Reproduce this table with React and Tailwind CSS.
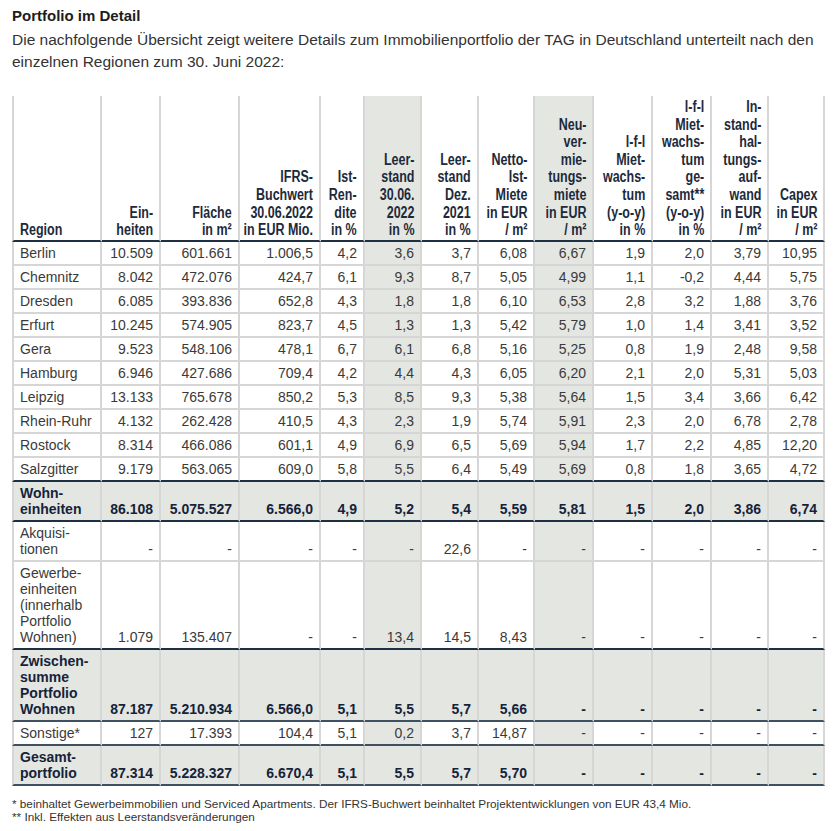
import clsx from 'clsx';

const HEAD = [
  ['Region'],
  ['Ein-', 'heiten'],
  ['Fläche', 'in m²'],
  ['IFRS-', 'Buchwert', '30.06.2022', 'in EUR Mio.'],
  ['Ist-', 'Ren-', 'dite', 'in %'],
  ['Leer-', 'stand', '30.06.', '2022', 'in %'],
  ['Leer-', 'stand', 'Dez.', '2021', 'in %'],
  ['Netto-', 'Ist-', 'Miete', 'in EUR', '/ m²'],
  ['Neu-', 'ver-', 'mie-', 'tungs-', 'miete', 'in EUR', '/ m²'],
  ['l-f-l', 'Miet-', 'wachs-', 'tum', '(y-o-y)', 'in %'],
  ['l-f-l', 'Miet-', 'wachs-', 'tum', 'ge-', 'samt**', '(y-o-y)', 'in %'],
  ['In-', 'stand-', 'hal-', 'tungs-', 'auf-', 'wand', 'in EUR', '/ m²'],
  ['Capex', 'in EUR', '/ m²'],
];

// widths incl. right border, first one also holds the left border
const WIDTHS = [
  'w-[90px]', 'w-[59px]', 'w-[79px]', 'w-[81px]', 'w-[44px]', 'w-[57px]', 'w-[57px]',
  'w-[56px]', 'w-[59px]', 'w-[59px]', 'w-[59px]', 'w-[57px]', 'w-[56px]',
];

const SHADED = [5, 8];

const ROWS = [
  { label: ['Berlin'], v: ['10.509', '601.661', '1.006,5', '4,2', '3,6', '3,7', '6,08', '6,67', '1,9', '2,0', '3,79', '10,95'] },
  { label: ['Chemnitz'], v: ['8.042', '472.076', '424,7', '6,1', '9,3', '8,7', '5,05', '4,99', '1,1', '-0,2', '4,44', '5,75'] },
  { label: ['Dresden'], v: ['6.085', '393.836', '652,8', '4,3', '1,8', '1,8', '6,10', '6,53', '2,8', '3,2', '1,88', '3,76'] },
  { label: ['Erfurt'], v: ['10.245', '574.905', '823,7', '4,5', '1,3', '1,3', '5,42', '5,79', '1,0', '1,4', '3,41', '3,52'] },
  { label: ['Gera'], v: ['9.523', '548.106', '478,1', '6,7', '6,1', '6,8', '5,16', '5,25', '0,8', '1,9', '2,48', '9,58'] },
  { label: ['Hamburg'], v: ['6.946', '427.686', '709,4', '4,2', '4,4', '4,3', '6,05', '6,20', '2,1', '2,0', '5,31', '5,03'] },
  { label: ['Leipzig'], v: ['13.133', '765.678', '850,2', '5,3', '8,5', '9,3', '5,38', '5,64', '1,5', '3,4', '3,66', '6,42'] },
  { label: ['Rhein-Ruhr'], v: ['4.132', '262.428', '410,5', '4,3', '2,3', '1,9', '5,74', '5,91', '2,3', '2,0', '6,78', '2,78'] },
  { label: ['Rostock'], v: ['8.314', '466.086', '601,1', '4,9', '6,9', '6,5', '5,69', '5,94', '1,7', '2,2', '4,85', '12,20'] },
  { label: ['Salzgitter'], v: ['9.179', '563.065', '609,0', '5,8', '5,5', '6,4', '5,49', '5,69', '0,8', '1,8', '3,65', '4,72'], line: 'dark' },
  { label: ['Wohn-', 'einheiten'], total: true, line: 'dark', v: ['86.108', '5.075.527', '6.566,0', '4,9', '5,2', '5,4', '5,59', '5,81', '1,5', '2,0', '3,86', '6,74'] },
  { label: ['Akquisi-', 'tionen'], v: ['-', '-', '-', '-', '-', '22,6', '-', '-', '-', '-', '-', '-'] },
  { label: ['Gewerbe-', 'einheiten', '(innerhalb', 'Portfolio', 'Wohnen)'], line: 'dark', v: ['1.079', '135.407', '-', '-', '13,4', '14,5', '8,43', '-', '-', '-', '-', '-'] },
  { label: ['Zwischen-', 'summe', 'Portfolio', 'Wohnen'], total: true, line: 'mid', v: ['87.187', '5.210.934', '6.566,0', '5,1', '5,5', '5,7', '5,66', '-', '-', '-', '-', '-'] },
  { label: ['Sonstige*'], line: 'mid', v: ['127', '17.393', '104,4', '5,1', '0,2', '3,7', '14,87', '-', '-', '-', '-', '-'] },
  { label: ['Gesamt-', 'portfolio'], total: true, line: 'mid', v: ['87.314', '5.228.327', '6.670,4', '5,1', '5,5', '5,7', '5,70', '-', '-', '-', '-', '-'] },
];

function Lines({ lines }) {
  return lines.map((l, i) => (
    <span key={i}>
      {i > 0 && <br />}
      {l}
    </span>
  ));
}

function lineClass(line) {
  if (line === 'dark') return 'border-b-[#1d3044]';
  if (line === 'mid') return 'border-b-[#3f5062]';
  return 'border-b-[#d6d6d6]';
}

export default function App() {
  return (
    <div className="w-[834px] min-h-[831px] bg-white px-[12px] pt-[6px] font-[family-name:Liberation_Sans,Arial,sans-serif] text-[#3a3a3a]">
      <h2 className="text-[15px] font-bold leading-[20px] text-[#1c1c1c]">Portfolio im Detail</h2>
      <p className="mt-[3px] text-[15.5px] leading-[22px] text-[#333]">
        Die nachfolgende Übersicht zeigt weitere Details zum Immobilienportfolio der TAG in Deutschland unterteilt nach den
        einzelnen Regionen zum 30. Juni 2022:
      </p>

      <table className="mt-[23px] w-[813px] table-fixed border-separate border-spacing-0 text-[14px] leading-4">
        <thead>
          <tr>
            {HEAD.map((lines, i) => (
              <th
                key={i}
                className={clsx(
                  WIDTHS[i],
                  'border-r-2 border-b-2 border-r-[#d6d6d6] border-b-[#1d3044] pt-[2px] pb-[1px] align-bottom whitespace-nowrap text-[16px] leading-[17.6px] font-bold text-[#1c2a3c]',
                  i === 0 ? 'border-l-2 border-l-[#d6d6d6] pl-[6px] text-left' : 'pr-[6px] text-right',
                  SHADED.includes(i) ? 'bg-[#e4e6e2]' : 'bg-white'
                )}
              >
                {/* condensed look: the report uses a narrow grotesk */}
                <div className={clsx('flex', i === 0 ? 'justify-start' : 'justify-end')}>
                  <div className={clsx('shrink-0 scale-x-[0.78]', i === 0 ? 'origin-left' : 'origin-right')}>
                    <Lines lines={lines} />
                  </div>
                </div>
              </th>
            ))}
          </tr>
        </thead>
        <tbody>
          {ROWS.map((row, r) => {
            const cells = [row.label, ...row.v.map((v) => [v])];
            return (
              <tr key={r}>
                {cells.map((lines, i) => (
                  <td
                    key={i}
                    className={clsx(
                      'border-r-2 border-b-2 border-r-[#d6d6d6] py-[3px] align-bottom whitespace-nowrap',
                      lineClass(row.line),
                      i === 0 ? 'border-l-2 border-l-[#d6d6d6] pl-[6px] text-left' : 'pr-[6px] text-right',
                      row.total ? 'font-bold text-[#15233a]' : 'text-[#3a3a3a]',
                      row.total || SHADED.includes(i) ? 'bg-[#e4e6e2]' : 'bg-white'
                    )}
                  >
                    <Lines lines={lines} />
                  </td>
                ))}
              </tr>
            );
          })}
        </tbody>
      </table>

      <div className="mt-[11px] text-[11.75px] leading-[13px] text-[#333]">
        <p>* beinhaltet Gewerbeimmobilien und Serviced Apartments. Der IFRS-Buchwert beinhaltet Projektentwicklungen von EUR 43,4 Mio.</p>
        <p>** Inkl. Effekten aus Leerstandsveränderungen</p>
      </div>
    </div>
  );
}
